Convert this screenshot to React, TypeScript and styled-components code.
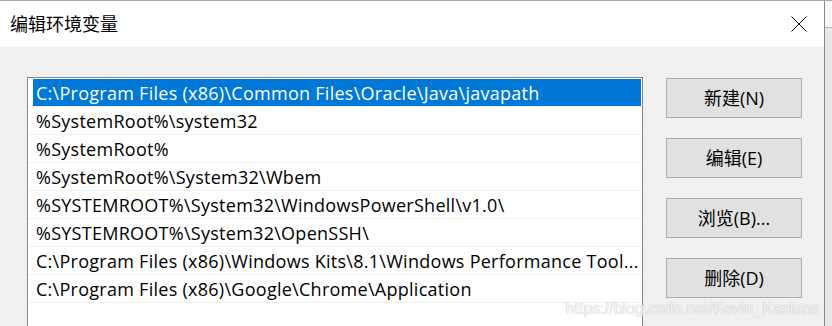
import styled, { createGlobalStyle } from 'styled-components';

const GlobalStyle = createGlobalStyle`
  html, body {
    margin: 0;
    padding: 0;
    background: #e6e6e6;
    overflow: hidden;
  }
  body {
    font-family: 'Open Sans', 'Noto Sans CJK SC', sans-serif;
  }
`;

const Screen = styled.div`
  display: flex;
  width: 832px;
  height: 326px;
  overflow: hidden;
  border-top: 1px solid #a8a8a8;
  box-sizing: border-box;
`;

const Dialog = styled.div`
  position: relative;
  width: 825px;
  flex-shrink: 0;
  display: flex;
  flex-direction: column;
  border-right: 1px solid #8a8a8a;
  box-sizing: border-box;
  background: #f0f0f0;
  overflow: hidden;
`;

const SideStrip = styled.div`
  flex: 1;
  display: flex;
  flex-direction: column;
`;

const StripTop = styled.div`
  height: 26px;
  background: #f7f7f7;
  border-bottom: 1px solid #b4b4b4;
`;

const StripBody = styled.div`
  flex: 1;
  background: #e8e8e8;
`;

const TitleBar = styled.div`
  height: 46px;
  flex-shrink: 0;
  background: #ffffff;
  display: flex;
  align-items: center;
  justify-content: space-between;
  padding: 0 17px 0 10px;
`;

const Title = styled.div`
  font-family: 'Noto Sans CJK SC', sans-serif;
  font-size: 18px;
  color: #000;
  line-height: 1;
  margin-top: -2px;
`;

const CloseButton = styled.div`
  width: 16px;
  height: 16px;
  display: flex;
  margin-top: -1px;
`;

const Body = styled.div`
  flex: 1;
  min-height: 0;
  display: flex;
  align-items: flex-start;
  gap: 23px;
  padding: 30px 0 0 27px;
`;

const ListBox = styled.div`
  width: 616px;
  height: 270px;
  flex-shrink: 0;
  box-sizing: border-box;
  background: #ffffff;
  border: 1px solid #828790;
  padding: 1px 1px 0 1px;
`;

const Row = styled.div`
  height: 27px;
  display: flex;
  border-bottom: 1px solid #f0f0f0;
  padding-left: 4px;
`;

const Label = styled.div<{ $selected?: boolean }>`
  flex: 1;
  display: flex;
  align-items: center;
  padding-left: 3px;
  font-size: 18px;
  letter-spacing: 0.27px;
  line-height: 1;
  white-space: nowrap;
  overflow: hidden;
  color: ${p => (p.$selected ? '#ffffff' : '#000000')};
  background: ${p => (p.$selected ? '#0078d7' : 'transparent')};
`;

const ButtonColumn = styled.div`
  display: flex;
  flex-direction: column;
  gap: 20px;
  margin-top: 1px;
`;

const Button = styled.div`
  width: 136px;
  height: 40px;
  box-sizing: border-box;
  background: #e1e1e1;
  border: 1px solid #adadad;
  display: flex;
  align-items: center;
  justify-content: center;
  font-size: 18px;
  line-height: 1;
  color: #000;
`;

const Watermark = styled.div`
  position: absolute;
  right: 4px;
  bottom: 9px;
  font-family: 'Liberation Sans', Arial, sans-serif;
  font-size: 16px;
  line-height: 1;
  color: rgba(255, 255, 255, 0.9);
  text-shadow: 0 0 1px rgba(0, 0, 0, 0.35);
`;

const paths = [
  'C:\\Program Files (x86)\\Common Files\\Oracle\\Java\\javapath',
  '%SystemRoot%\\system32',
  '%SystemRoot%',
  '%SystemRoot%\\System32\\Wbem',
  '%SYSTEMROOT%\\System32\\WindowsPowerShell\\v1.0\\',
  '%SYSTEMROOT%\\System32\\OpenSSH\\',
  'C:\\Program Files (x86)\\Windows Kits\\8.1\\Windows Performance Tool...',
  'C:\\Program Files (x86)\\Google\\Chrome\\Application',
];

const buttons = ['新建(N)', '编辑(E)', '浏览(B)...', '删除(D)'];

export default function App() {
  return (
    <>
      <GlobalStyle />
      <Screen>
        <Dialog>
          <TitleBar>
            <Title>编辑环境变量</Title>
            <CloseButton>
              <svg width='16' height='16' viewBox='0 0 16 16'>
                <path d='M0.5 0.5 L15.5 15.5 M15.5 0.5 L0.5 15.5' stroke='#000' strokeWidth='1' fill='none' />
              </svg>
            </CloseButton>
          </TitleBar>
          <Body>
            <ListBox>
              {paths.map((p, i) => (
                <Row key={p}>
                  <Label $selected={i === 0}>{p}</Label>
                </Row>
              ))}
            </ListBox>
            <ButtonColumn>
              {buttons.map(b => (
                <Button key={b}>{b}</Button>
              ))}
            </ButtonColumn>
          </Body>
          <Watermark>https://blog.csdn.net/Kevin_Kaslana</Watermark>
        </Dialog>
        <SideStrip>
          <StripTop />
          <StripBody />
        </SideStrip>
      </Screen>
    </>
  );
}
